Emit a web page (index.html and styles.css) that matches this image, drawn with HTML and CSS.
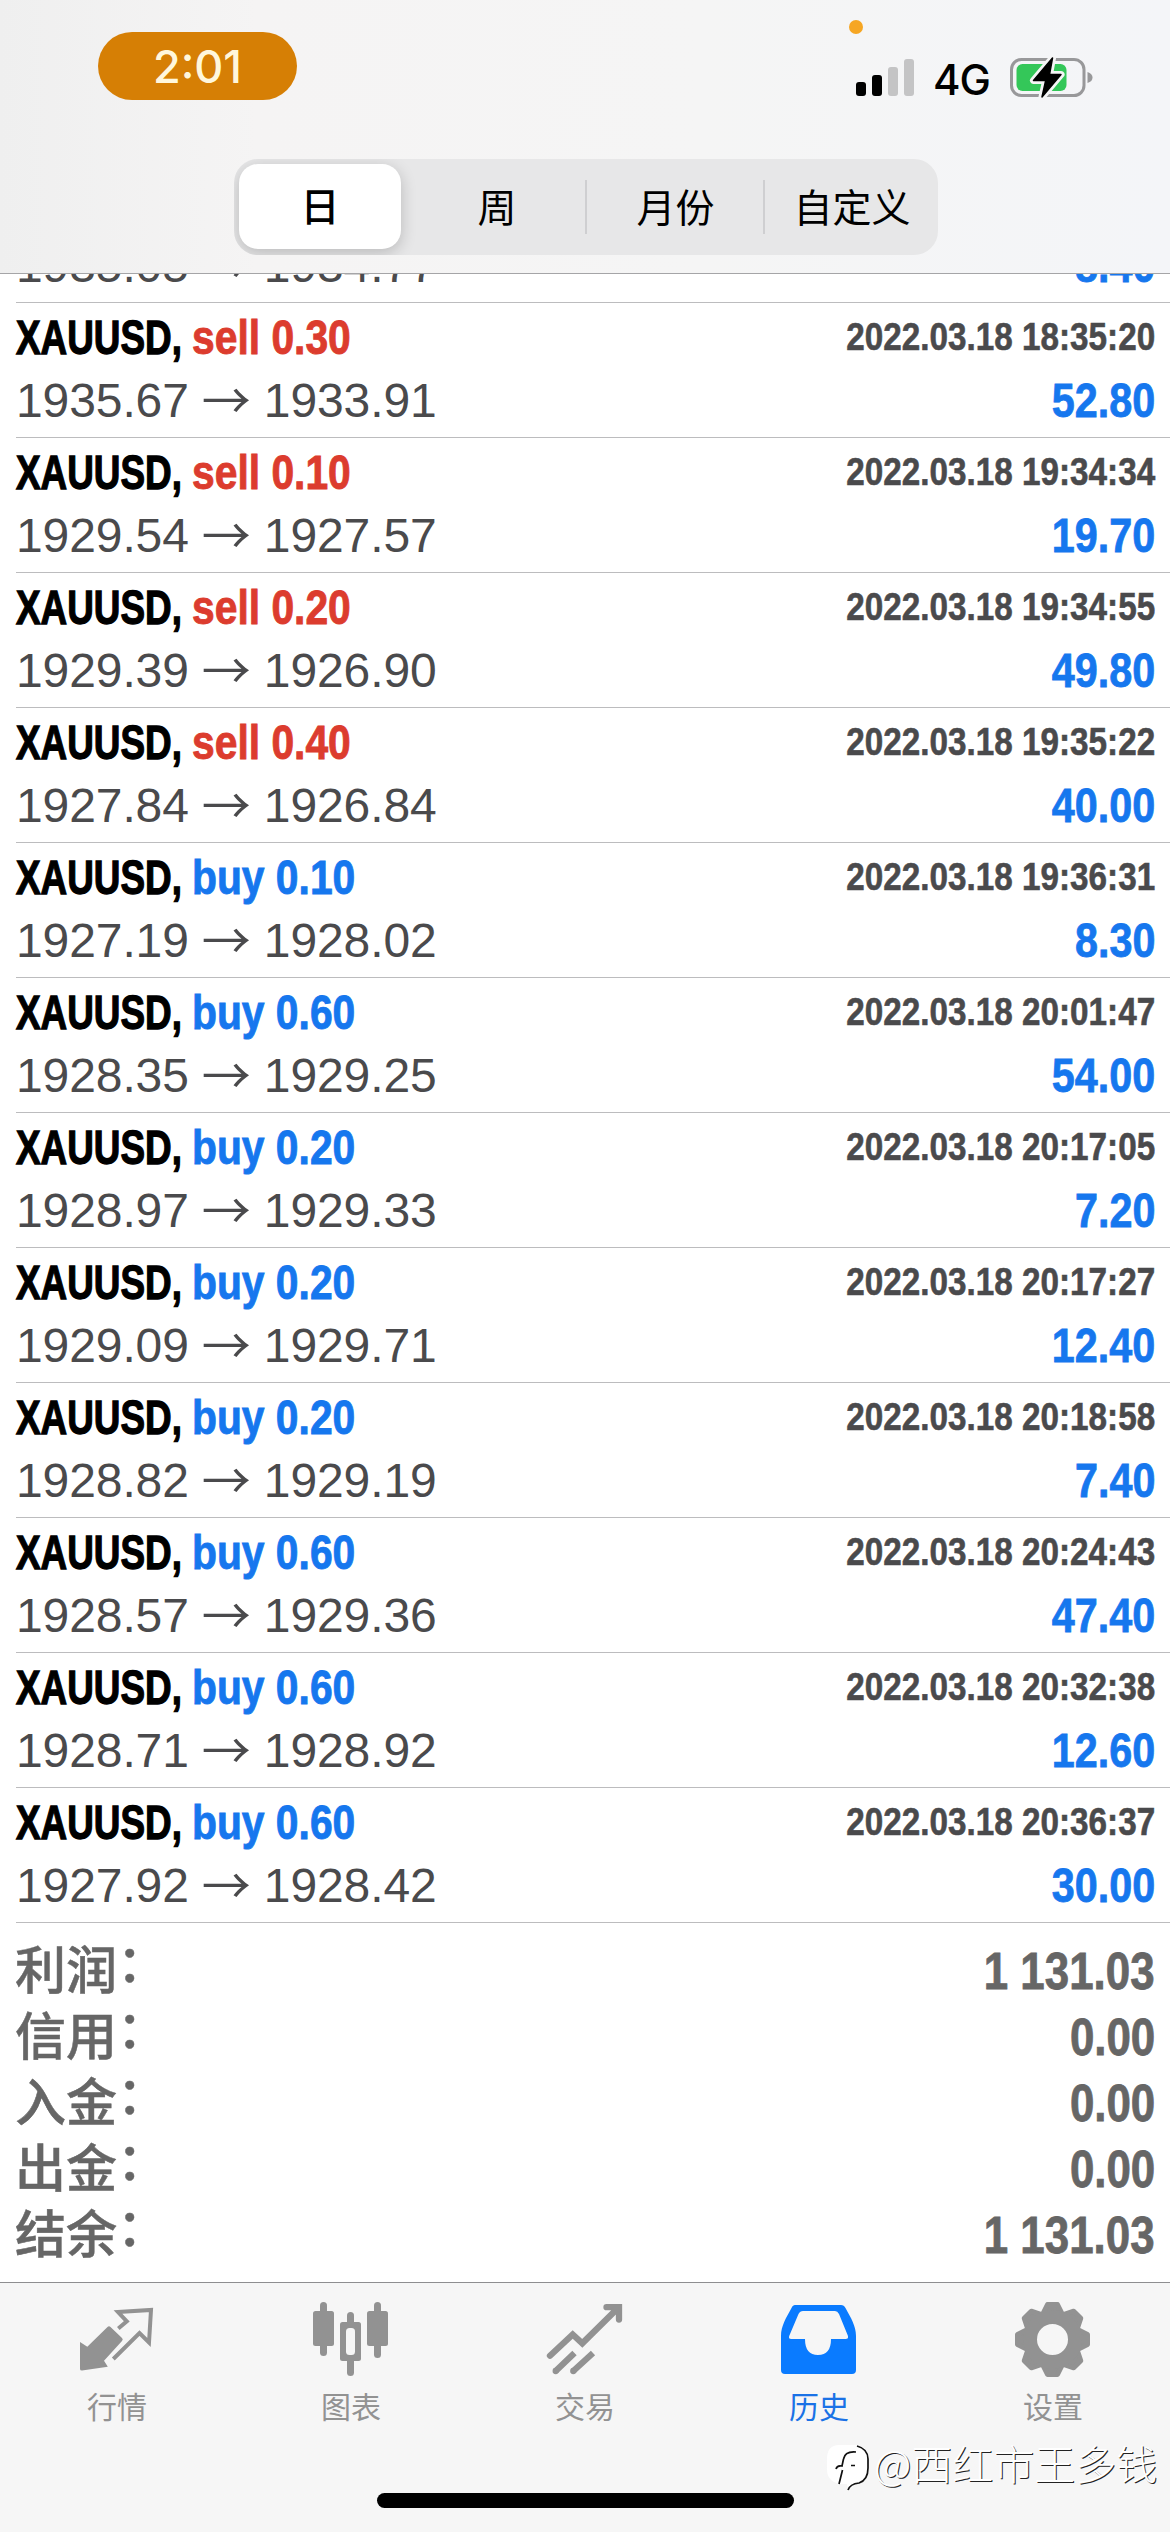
FILE: index.html
```html
<!DOCTYPE html>
<html lang="zh-CN">
<head>
<meta charset="utf-8">
<title>历史</title>
<link rel="stylesheet" href="styles.css">
</head>
<body>
<header class="header">
  <div class="status">
    <div class="time-pill">2:01</div>
    <div class="status-right">
      <span class="mic-dot"></span>
      <svg class="signal" width="58" height="38" viewBox="0 0 58 38">
        <rect x="0" y="23" width="10" height="14" rx="3"/>
        <rect x="16" y="16" width="10" height="21" rx="3"/>
        <rect x="32" y="8" width="10" height="29" rx="3" fill="#c4c4c5"/>
        <rect x="48" y="0" width="10" height="37" rx="3" fill="#c4c4c5"/>
      </svg>
      <span class="network">4G</span>
      <svg class="battery" width="84" height="44" viewBox="0 0 84 44">
        <rect x="1.5" y="3.5" width="72.500" height="36" rx="10" fill="none" stroke="#98989a" stroke-width="3"/>
        <path d="M77.500 16q5 1.500 5 5.500t-5 5.500z" fill="#98989a"/>
        <rect x="6.500" y="8" width="50" height="27" rx="6" fill="#34c759"/>
        <path d="M42.500 2 23.500 24.500h12.200L32 41 51 18.500H39.500z" stroke="#f5f5f6" stroke-width="7" stroke-linejoin="round"/>
        <path d="M42.500 2 23.500 24.500h12.200L32 41 51 18.500H39.500z" stroke="#000" stroke-width="1.500" stroke-linejoin="round"/>
      </svg>
    </div>
  </div>
  <nav class="segments">
    <span class="segment selected">日</span>
    <span class="segment">周</span>
    <span class="segment divided">月份</span>
    <span class="segment divided">自定义</span>
  </nav>
</header>

<main class="history">
  <article class="deal">
    <div class="line prices"><span class="quote">1935.05<i class="arrow">→</i>1934.77</span><span class="profit">8.40</span></div>
  </article>
  <article class="deal">
    <div class="line head"><span class="symbol">XAUUSD, </span><span class="side sell">sell 0.30</span><time>2022.03.18 18:35:20</time></div>
    <div class="line prices"><span class="quote">1935.67<i class="arrow">→</i>1933.91</span><span class="profit">52.80</span></div>
  </article>
  <article class="deal">
    <div class="line head"><span class="symbol">XAUUSD, </span><span class="side sell">sell 0.10</span><time>2022.03.18 19:34:34</time></div>
    <div class="line prices"><span class="quote">1929.54<i class="arrow">→</i>1927.57</span><span class="profit">19.70</span></div>
  </article>
  <article class="deal">
    <div class="line head"><span class="symbol">XAUUSD, </span><span class="side sell">sell 0.20</span><time>2022.03.18 19:34:55</time></div>
    <div class="line prices"><span class="quote">1929.39<i class="arrow">→</i>1926.90</span><span class="profit">49.80</span></div>
  </article>
  <article class="deal">
    <div class="line head"><span class="symbol">XAUUSD, </span><span class="side sell">sell 0.40</span><time>2022.03.18 19:35:22</time></div>
    <div class="line prices"><span class="quote">1927.84<i class="arrow">→</i>1926.84</span><span class="profit">40.00</span></div>
  </article>
  <article class="deal">
    <div class="line head"><span class="symbol">XAUUSD, </span><span class="side buy">buy 0.10</span><time>2022.03.18 19:36:31</time></div>
    <div class="line prices"><span class="quote">1927.19<i class="arrow">→</i>1928.02</span><span class="profit">8.30</span></div>
  </article>
  <article class="deal">
    <div class="line head"><span class="symbol">XAUUSD, </span><span class="side buy">buy 0.60</span><time>2022.03.18 20:01:47</time></div>
    <div class="line prices"><span class="quote">1928.35<i class="arrow">→</i>1929.25</span><span class="profit">54.00</span></div>
  </article>
  <article class="deal">
    <div class="line head"><span class="symbol">XAUUSD, </span><span class="side buy">buy 0.20</span><time>2022.03.18 20:17:05</time></div>
    <div class="line prices"><span class="quote">1928.97<i class="arrow">→</i>1929.33</span><span class="profit">7.20</span></div>
  </article>
  <article class="deal">
    <div class="line head"><span class="symbol">XAUUSD, </span><span class="side buy">buy 0.20</span><time>2022.03.18 20:17:27</time></div>
    <div class="line prices"><span class="quote">1929.09<i class="arrow">→</i>1929.71</span><span class="profit">12.40</span></div>
  </article>
  <article class="deal">
    <div class="line head"><span class="symbol">XAUUSD, </span><span class="side buy">buy 0.20</span><time>2022.03.18 20:18:58</time></div>
    <div class="line prices"><span class="quote">1928.82<i class="arrow">→</i>1929.19</span><span class="profit">7.40</span></div>
  </article>
  <article class="deal">
    <div class="line head"><span class="symbol">XAUUSD, </span><span class="side buy">buy 0.60</span><time>2022.03.18 20:24:43</time></div>
    <div class="line prices"><span class="quote">1928.57<i class="arrow">→</i>1929.36</span><span class="profit">47.40</span></div>
  </article>
  <article class="deal">
    <div class="line head"><span class="symbol">XAUUSD, </span><span class="side buy">buy 0.60</span><time>2022.03.18 20:32:38</time></div>
    <div class="line prices"><span class="quote">1928.71<i class="arrow">→</i>1928.92</span><span class="profit">12.60</span></div>
  </article>
  <article class="deal">
    <div class="line head"><span class="symbol">XAUUSD, </span><span class="side buy">buy 0.60</span><time>2022.03.18 20:36:37</time></div>
    <div class="line prices"><span class="quote">1927.92<i class="arrow">→</i>1928.42</span><span class="profit">30.00</span></div>
  </article>
  <dl class="totals">
    <div class="total"><dt>利润<span class="colon">：</span></dt><dd>1 131.03</dd></div>
    <div class="total"><dt>信用<span class="colon">：</span></dt><dd>0.00</dd></div>
    <div class="total"><dt>入金<span class="colon">：</span></dt><dd>0.00</dd></div>
    <div class="total"><dt>出金<span class="colon">：</span></dt><dd>0.00</dd></div>
    <div class="total"><dt>结余<span class="colon">：</span></dt><dd>1 131.03</dd></div>
  </dl>
</main>

<footer class="tabbar">
  <nav class="tabs">
    <a class="tab">
      <svg width="80" height="80" viewBox="0 0 80 80">
        <path d="M3 42l7.300 4.700L30.500 27q1.500-1.500 3 0L45 38q1.500 1.500 0 3L27 60.700l3.800 6L5 70.500Q3 70.500 3 69z" fill="currentColor"/>
        <path d="M41.300 28.500l8.500-7.200L41 12l33-2-2 32.500-9.500-9.500L36.300 59" fill="none" stroke="currentColor" stroke-width="4"/>
      </svg>
      <span>行情</span>
    </a>
    <a class="tab">
      <svg width="80" height="80" viewBox="0 0 80 80" fill="currentColor">
        <rect x="2" y="11" width="21" height="35" rx="2.500"/><rect x="9" y="2" width="7" height="54" rx="3.500"/>
        <rect x="56" y="11" width="21" height="35" rx="2.500"/><rect x="63" y="2" width="7" height="56" rx="3.500"/>
        <rect x="29" y="22" width="21" height="39" rx="2.500"/><rect x="36" y="12" width="7" height="64" rx="3.500"/>
        <rect x="35" y="28" width="9" height="27" rx="3.500" fill="#f6f6f6"/>
      </svg>
      <span>图表</span>
    </a>
    <a class="tab">
      <svg width="80" height="80" viewBox="0 0 80 80" fill="none" stroke="currentColor" stroke-width="6.300">
        <path d="M5 55.700 27.700 34.500l9.600 8.800L73 8M61.500 7.200H74V19.500" stroke-linecap="round"/>
        <path d="M10.700 71 29.500 53M28.300 71 48 53"/>
        <g fill="currentColor" stroke="none"><circle cx="10.700" cy="71" r="3.150"/><circle cx="28.300" cy="71" r="3.150"/></g>
      </svg>
      <span>交易</span>
    </a>
    <a class="tab active">
      <svg width="80" height="80" viewBox="0 0 80 80">
        <path fill="#0a7bff" fill-rule="evenodd" d="M17 5h45q3 0 4.500 3C72 18 77 26 77 36v34q0 4-4 4H6q-4 0-4-4V36C2 26 7 18 12.500 8 14 5 15 5 17 5zM24 11q-3 0-4.500 3L10.200 36q-1 3 2 3H26q0 16 13 16t13-16h14.500q3.500 0 2.300-3.500L60 14q-1.500-3-4-3z"/>
      </svg>
      <span>历史</span>
    </a>
    <a class="tab">
      <svg width="80" height="80" viewBox="-39.500 -39.500 80 80" fill="currentColor" stroke="currentColor" stroke-linejoin="round">
        <g stroke-width="5">
          <path id="tooth" d="M-5-35H5L9.500-26H-9.500z"/>
          <use href="#tooth" transform="rotate(45)"/><use href="#tooth" transform="rotate(90)"/><use href="#tooth" transform="rotate(135)"/>
          <use href="#tooth" transform="rotate(180)"/><use href="#tooth" transform="rotate(225)"/><use href="#tooth" transform="rotate(270)"/><use href="#tooth" transform="rotate(315)"/>
        </g>
        <circle r="22.500" fill="none" stroke-width="14"/>
      </svg>
      <span>设置</span>
    </a>
  </nav>
  <div class="home-indicator"></div>
  <div class="watermark">
    <svg width="44" height="52" viewBox="0 0 44 52">
      <path d="M12 4H29Q41 5 41 17V28Q41 40 31 42L21 49 20 43Q0 44 0 28V18Q0 4 12 4z" fill="#fff"/>
      <path d="M30 5Q41 8 41 18V27Q41 39 32 42 23 43 21 49M29 11Q18 10 16.500 18L15 25Q10 24 9 28M15.500 29 12 43M24 24.500H28" fill="none" stroke="#111" stroke-width="1.700"/>
    </svg>
    <span>@西红市王多钱</span>
  </div>
</footer>
</body>
</html>
```
FILE: styles.css
```css
* { box-sizing: border-box; }

body {
  margin: 0;
  width: 1170px;
  height: 2532px;
  display: flex;
  flex-direction: column;
  overflow: hidden;
  background: #fff;
  font-family: "Liberation Sans", "Noto Sans CJK SC", sans-serif;
}

.header {
  height: 274px;
  flex: none;
  border-bottom: 1px solid #a5a5a7;
  background: linear-gradient(90deg, #efefef 0, #f5f4f4 22%, #f5f5f5 60%, #f4f5f8 100%);
}

.status {
  height: 159px;
  display: flex;
  justify-content: space-between;
  padding: 32px 76px 0 98px;
}

.time-pill {
  width: 199px;
  height: 68px;
  border-radius: 34px;
  background: #d67f05;
  color: #fff7dc;
  font: 500 45px/70px Inter, sans-serif;
  text-align: center;
}

.status-right {
  position: relative;
  display: flex;
  align-items: flex-start;
  padding-top: 27px;
}

.mic-dot {
  position: absolute;
  left: -7px;
  top: -12px;
  width: 14px;
  height: 14px;
  border-radius: 50%;
  background: #f6a623;
}

.network {
  margin: 0 20px 0 19px;
  font: 500 42px/42px Inter, sans-serif;
  letter-spacing: -1px;
}

.battery { margin-top: -3px; }

.segments {
  display: grid;
  grid-template-columns: 172px 179px 178px 175px;
  width: 704px;
  height: 96px;
  margin-left: 234px;
  border-radius: 24px;
  background: #e7e7e8;
  overflow: hidden;
}

.segment {
  display: flex;
  align-items: center;
  justify-content: center;
  padding: 0 0 4px 3px;
  font: 400 39px/1 "Noto Sans CJK SC", sans-serif;
  color: #000;
}

.segment.selected {
  margin: 5px 5px 6px;
  padding-left: 0;
  border-radius: 19px;
  background: #fff;
  box-shadow: 0 4px 16px rgba(0, 0, 0, .2);
  font-weight: 500;
}

.segment.divided {
  background: linear-gradient(#cfcfd1, #cfcfd1) left center / 2px 54px no-repeat;
}

.history {
  flex: 1;
  min-height: 0;
  display: flex;
  flex-direction: column;
  justify-content: flex-end;
  overflow: hidden;
}

.deal {
  flex: none;
  display: flex;
  flex-direction: column;
  justify-content: flex-end;
  height: 135px;
  margin-left: 16px;
  padding: 0 15px 2px 0;
  border-bottom: 1px solid #bcbcbe;
}

.line {
  display: flex;
  white-space: pre;
}

.head {
  height: 58px;
  font-size: 48px;
  font-weight: 700;
  line-height: 57px;
}

/* Condensed bold face, made from the regular-width bold */
.symbol {
  width: 229px;
  margin-right: -53px;
  transform: scaleX(.768);
  transform-origin: left;
  -webkit-text-stroke: 1.3px;
}

.side {
  transform: scaleX(.85);
  transform-origin: left;
  -webkit-text-stroke: .9px;
}

.sell { color: #dc3c2e; }
.buy { color: #1677ee; }

time {
  margin-left: auto;
  font-size: 39px;
  line-height: 56px;
  color: #4a4a4c;
  transform: scaleX(.853);
  transform-origin: right;
  -webkit-text-stroke: .6px;
}

.prices {
  height: 68px;
  justify-content: space-between;
  line-height: 68px;
}

.quote {
  font-size: 48px;
  letter-spacing: -.1px;
  color: #4a4a4c;
}

.arrow {
  display: inline-block;
  width: 75px;
  font: 400 49px/49px "Noto Sans CJK SC", sans-serif;
  text-align: center;
  vertical-align: -2px;
}

.profit {
  font-size: 48px;
  font-weight: 700;
  color: #1677ee;
  transform: scaleX(.86);
  transform-origin: right;
  -webkit-text-stroke: .8px;
}

.totals {
  flex: none;
  height: 359px;
  margin: 0;
  padding: 15px 15px 0 16px;
}

.total {
  display: flex;
  justify-content: space-between;
  height: 66px;
  color: #666;
}

.total dt {
  margin: -3px 0 0 -1px;
  font: 500 51px/60px "Noto Sans CJK SC", sans-serif;
  -webkit-text-stroke: .5px;
}

.colon {
  line-height: 1;
  vertical-align: 7px;
}

.total dd {
  margin: 0;
  font-size: 51px;
  font-weight: 700;
  line-height: 67px;
  transform: scaleX(.86);
  transform-origin: right;
  -webkit-text-stroke: .8px;
}

.tabbar {
  position: relative;
  flex: none;
  height: 250px;
  border-top: 1px solid #8e8e90;
  background: #f6f6f6;
}

.tabs {
  display: grid;
  grid-template-columns: repeat(5, 1fr);
  padding-top: 17px;
}

.tab {
  display: flex;
  flex-direction: column;
  align-items: center;
  color: #929292;
  font: 400 30px/40px "Noto Sans CJK SC", sans-serif;
}

.tab span { margin-top: 5px; }

.tab.active { color: #1a72e6; }

.home-indicator {
  position: absolute;
  left: 377px;
  bottom: 24px;
  width: 417px;
  height: 15px;
  border-radius: 8px;
  background: #000;
}

.watermark {
  position: absolute;
  left: 827px;
  top: 158px;
  display: flex;
  align-items: flex-start;
  gap: 3px;
  color: #fff;
  font: 300 41px/42px "Noto Sans CJK SC", sans-serif;
  text-shadow: 1px 1px 0 #222;
  white-space: nowrap;
}
```
